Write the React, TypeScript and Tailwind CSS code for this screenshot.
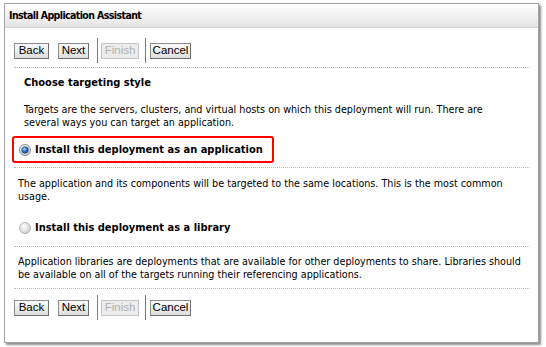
import React from "react";

function Radio({ checked }: { checked: boolean }) {
  return (
    <svg width="12" height="12" viewBox="0 0 13 13" className="shrink-0">
      <defs>
        <radialGradient id={checked ? "rg1" : "rg2"} cx="40%" cy="35%" r="70%">
          <stop offset="0%" stopColor="#ffffff" />
          <stop offset="100%" stopColor={checked ? "#c4c4c4" : "#c9c9c9"} />
        </radialGradient>
        <radialGradient id="dot" cx="40%" cy="35%" r="70%">
          <stop offset="0%" stopColor="#a8d4ff" />
          <stop offset="55%" stopColor="#2f6fc0" />
          <stop offset="100%" stopColor="#123f7a" />
        </radialGradient>
      </defs>
      <circle cx="6.5" cy="6.5" r="6" fill={`url(#${checked ? "rg1" : "rg2"})`} stroke={checked ? "#8c8c8c" : "#b0b0b0"} strokeWidth="1" />
      {checked && <circle cx="6.5" cy="6.5" r="3.6" fill="url(#dot)" stroke="#1a3f6e" strokeWidth="0.6" />}
    </svg>
  );
}

function Btn({ label, w, disabled }: { label: string; w: string; disabled?: boolean }) {
  return (
    <div
      className={`${w} h-[16px] flex items-center justify-center border text-[11.5px] leading-none [font-family:'Liberation_Sans',Arial,sans-serif] ${
        disabled
          ? "border-[#c4c4c4] text-[#b0b0b0] bg-[#ececec]"
          : "border-[#8c8c8c] border-r-[#6e6e6e] border-b-[#6e6e6e] text-black bg-gradient-to-b from-[#fbfbfb] to-[#dedede]"
      }`}
    >
      {label}
    </div>
  );
}

function ButtonRow() {
  return (
    <div className="flex items-center h-[25px]">
      <Btn label="Back" w="w-[35px]" />
      <div className="w-[9px]" />
      <Btn label="Next" w="w-[31px]" />
      <div className="w-[8px]" />
      <div className="w-px h-[25px] bg-[#7a7a7a]" />
      <div className="w-[3px]" />
      <Btn label="Finish" w="w-[38px]" disabled />
      <div className="w-[6px]" />
      <div className="w-px h-[25px] bg-[#7a7a7a]" />
      <div className="w-[4px]" />
      <Btn label="Cancel" w="w-[41px]" />
    </div>
  );
}

function Dots() {
  return <div className="border-b border-dotted border-[#bdbdbd]" />;
}

export default function App() {
  return (
    <div className="w-[546px] h-[347px] bg-white pt-[3px] pl-[4px] text-black [font-family:'DejaVu_Sans_Condensed','DejaVu_Sans',sans-serif]">
      <div className="w-[535px] h-[340px] border border-[#a3a3a3] bg-white shadow-[2px_2px_2px_rgba(0,0,0,0.45)] flex flex-col">
        <div className="h-[24px] bg-gradient-to-b from-white to-[#e4e4e4] border-b border-[#d4d4d4] flex items-center pl-[4px] font-bold text-[10.5px] tracking-[-0.6px]">
          Install Application Assistant
        </div>
        <div className="pl-[9px] pr-[8px]">
          <div className="mt-[10px]">
            <ButtonRow />
          </div>
          <div className="mt-[4px]">
            <Dots />
          </div>
          <div className="mt-[8px] pl-[10px] font-bold text-[11px] leading-[14px]">Choose targeting style</div>
          <p className="mt-[13px] pl-[10px] text-[10.7px] leading-[13px] whitespace-nowrap">
            Targets are the servers, clusters, and virtual hosts on which this deployment will run. There are
            <br />
            several ways you can target an application.
          </p>
          <div className="mt-[7px] -ml-[2px] w-[262px] h-[27px] border-2 border-[#ff0000] rounded-[3px] flex items-center pl-[5px] gap-[4px]">
            <Radio checked />
            <span className="font-bold text-[11px] leading-[14px] whitespace-nowrap">Install this deployment as an application</span>
          </div>
          <div className="mt-[4px]">
            <Dots />
          </div>
          <p className="mt-[9px] pl-[4px] text-[10.7px] leading-[13px] whitespace-nowrap">
            The application and its components will be targeted to the same locations. This is the most common
            <br />
            usage.
          </p>
          <div className="mt-[18px] h-[14px] flex items-center pl-[5px] gap-[4px]">
            <Radio checked={false} />
            <span className="font-bold text-[11px] leading-[14px] whitespace-nowrap">Install this deployment as a library</span>
          </div>
          <div className="mt-[11px]">
            <Dots />
          </div>
          <p className="mt-[8px] pl-[4px] text-[10.7px] leading-[13px] whitespace-nowrap">
            Application libraries are deployments that are available for other deployments to share. Libraries should
            <br />
            be available on all of the targets running their referencing applications.
          </p>
          <div className="mt-[7px]">
            <Dots />
          </div>
          <div className="mt-[6px]">
            <ButtonRow />
          </div>
        </div>
      </div>
    </div>
  );
}
